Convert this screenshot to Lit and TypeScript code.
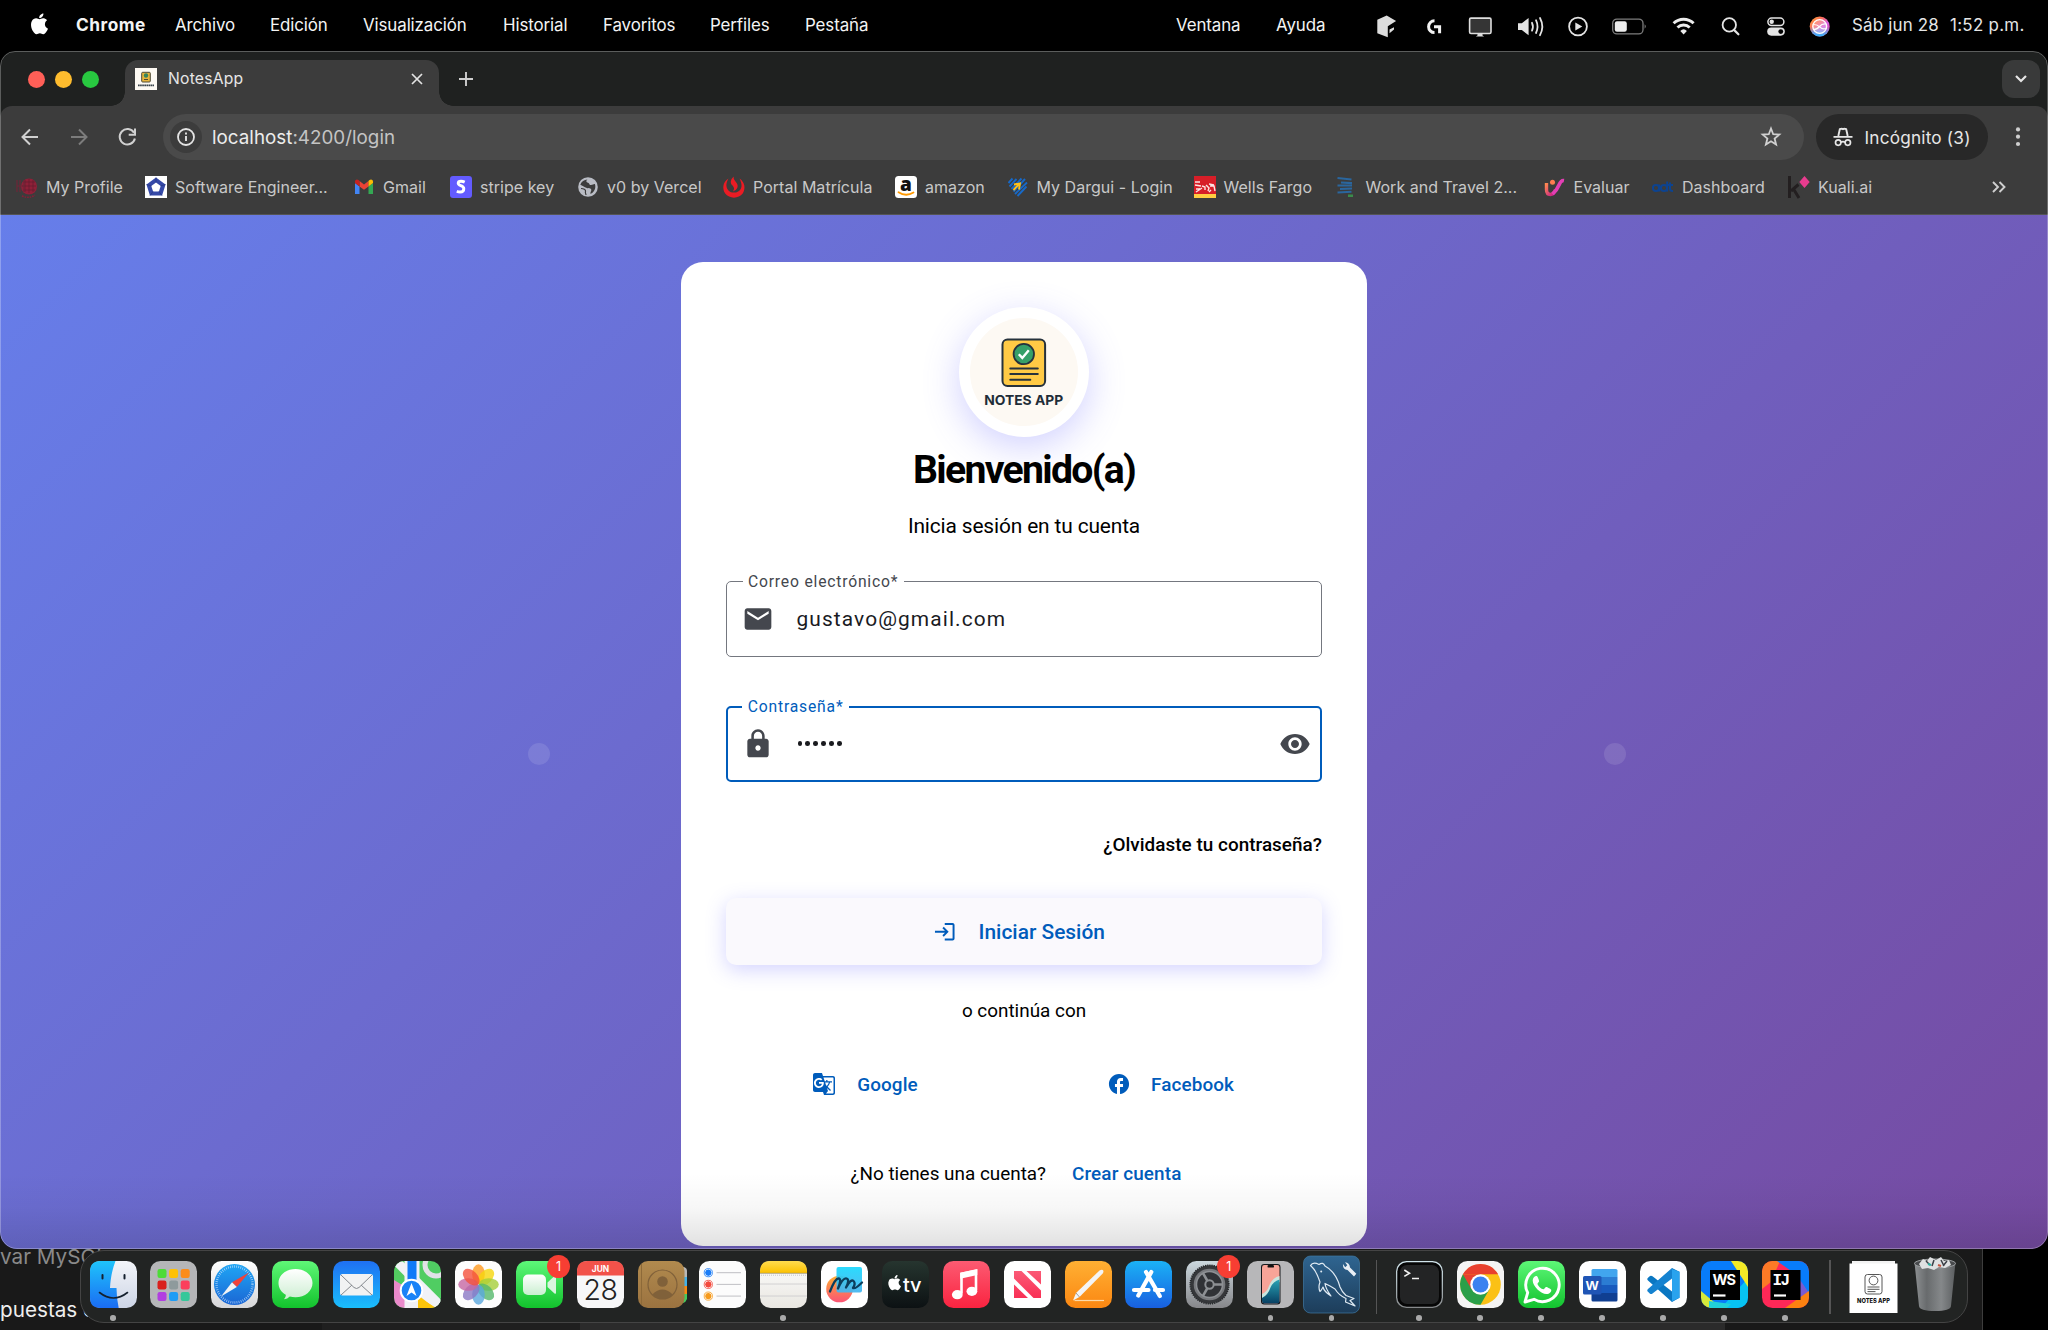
import { LitElement, html, svg, css } from "lit";
import { customElement } from "lit/decorators.js";
import { styleMap } from "lit/directives/style-map.js";

type Cell = { label: string; w: number };

/* ---------- macOS menu bar ---------- */

const menus: Cell[] = [
  { label: "Archivo", w: 95 },
  { label: "Edición", w: 93 },
  { label: "Visualización", w: 140 },
  { label: "Historial", w: 100 },
  { label: "Favoritos", w: 107 },
  { label: "Perfiles", w: 95 },
  { label: "Pestaña", w: 371 },
  { label: "Ventana", w: 100 },
  { label: "Ayuda", w: 101 },
];

// Every status glyph owns a slice of the strip: [start, width, drawing]
const statusIcons: [number, number, unknown][] = [
  [1377, 50, svg`<path d="M1377.3 18.3 1386.7 14l9.4 5.4-8.3 5.3v11l-10.5-4z" fill="#ddd"/><path d="m1389.5 28 4.5-2.3v2.2l-4.5 3.8z" fill="#ddd"/>`],
  [1427, 41, svg`<path d="M1434.5 19.3a5.9 5.9 0 0 0 0 11.8M1434 25.2h5.6v6.6" fill="none" stroke="#f2f2f2" stroke-width="3"/>`],
  [1468, 49, svg`<rect x="1469.6" y="16.6" width="21.4" height="15.4" rx="1.4" fill="#353535" stroke="#dedede" stroke-width="1.6"/><path d="M1477.5 32.5h5v1.5l1.7 1h-8.4l1.7-1z" fill="#dedede"/>`],
  [1517, 50, svg`<path d="M1518 21.8h3.8l6.8-5.2v17.2l-6.8-5.2h-3.8z" fill="#e4e4e4"/><path d="M1532 21.3q1.8 3.9 0 7.8M1536 18.7q3 6.4 0 12.8M1540 16.5q4.6 8.6 0 17.2" fill="none" stroke="#e4e4e4" stroke-width="1.8" stroke-linecap="round"/>`],
  [1567, 44, svg`<circle cx="1578" cy="25" r="8.9" fill="none" stroke="#e4e4e4" stroke-width="1.8"/><path d="m1575.3 21 7 4-7 4z" fill="#e4e4e4"/>`],
  [1611, 60, svg`<rect x="1612.7" y="17.6" width="30.3" height="14.8" rx="4.2" fill="none" stroke="#7d7d7d" stroke-width="1.3"/><rect x="1614.8" y="19.7" width="12" height="10.6" rx="2.2" fill="#ececec"/><path d="M1644.6 22.8q2.4 2.2 0 4.4z" fill="#7d7d7d"/>`],
  [1671, 50, svg`<g fill="none" stroke="#ececec" stroke-width="2.9"><path d="M1673.6 21.8a14.2 14.2 0 0 1 20 0M1677.5 26a8.7 8.7 0 0 1 12.2 0"/></g><path d="M1680.3 29.4a4.8 4.8 0 0 1 6.6 0l-3.3 3.6z" fill="#ececec"/>`],
  [1721, 45, svg`<circle cx="1729.3" cy="23.4" r="6.7" fill="none" stroke="#e4e4e4" stroke-width="1.8"/><path d="m1734 28.4 4.4 4.4" stroke="#e4e4e4" stroke-width="2.2" stroke-linecap="round"/>`],
  [1766, 43, svg`<rect x="1767.9" y="16.6" width="16" height="7.4" rx="3.7" fill="none" stroke="#e4e4e4" stroke-width="1.5"/><circle cx="1771.7" cy="20.3" r="2.2" fill="#e4e4e4"/><rect x="1767.2" y="26" width="17.6" height="8.2" rx="4.1" fill="#e4e4e4"/><circle cx="1780.8" cy="30.1" r="2.4" fill="#000"/>`],
  [1809, 43, svg`<defs><linearGradient id="siri" x1="0" y1="0" x2="1" y2="1"><stop offset="0" stop-color="#ffb02e"/><stop offset=".35" stop-color="#fb6a5c"/><stop offset=".6" stop-color="#d45fe0"/><stop offset="1" stop-color="#f03f86"/></linearGradient><linearGradient id="siri2" x1="0" y1="0" x2="0" y2="1"><stop offset=".5" stop-color="#2fc6ff" stop-opacity="0"/><stop offset="1" stop-color="#25b9ff"/></linearGradient></defs><circle cx="1819.7" cy="25" r="10" fill="url(#siri)"/><circle cx="1819.7" cy="25" r="10" fill="url(#siri2)"/><circle cx="1819.7" cy="25" r="6.9" fill="#fff" fill-opacity=".25" stroke="#fff" stroke-width="1.4"/><path d="M1813.5 23q4 0 6.5 2.6t6 1.4M1813.5 28q3.5 0 6-3t6.5-2.5" fill="none" stroke="#fff" stroke-width="1.2"/>`],
];

/* ---------- bookmarks ---------- */

const bookmarks: { label: string; w: number; icon: unknown }[] = [
  { label: "My Profile", w: 129, icon: svg`<circle cx="13" cy="10.500" r="8" fill="#8f2038"/><path d="M7 6h12M6 10h14M7 14h12M13 3v14M9 4v12M17 4v12" stroke="#5c1c2c" stroke-width=".6"/><path d="M1 4v12M1 10h7M8 5v11M4 4v12" stroke="#6e2637" stroke-width="1.200"/><path d="M6 20q7 3 13-1" stroke="#8c1d37" stroke-width="1.400" fill="none" stroke-dasharray="1.600 1"/>` },
  { label: "Software Engineer...", w: 208, icon: svg`<path fill="#fff" d="M0 0h22v22H0z"/><path d="m11 1.500 9.500 7-3.400 11H4.900L1.500 8.500z" fill="#3549a8"/><path d="m11 6.500 4.700 3.400-1.800 5.600H8.100L6.300 9.900z" fill="#fff"/><path d="M11 1.500v5M1.500 8.500l4.800 1.400M20.500 8.500l-4.800 1.400M5 19.500l3.100-4M17 19.500l-3.100-4" stroke="#24357f" stroke-width=".7"/>` },
  { label: "Gmail", w: 97, icon: svg`<path d="M2 18V7l4.500 3.400V18z" fill="#4285f4"/><path d="M15.500 18v-7.600L20 7v11z" fill="#34a853"/><path d="M6.500 10.400V5l4.500 3.400L15.500 5v5.400L11 13.800z" fill="#ea4335"/><path d="M2 7V5.600C2 3.700 4 2.800 5.500 4l1 .9v5.500z" fill="#c5221f"/><path d="M15.500 10.400V4.900l1-.9C18 2.800 20 3.700 20 5.600V7z" fill="#fbbc04"/>` },
  { label: "stripe key", w: 127, icon: svg`<rect width="22" height="22" rx="3" fill="#635bff"/><path d="M14.700 6.100Q12.800 5.200 11 5.200c-1.700 0-2.800.7-2.800 2 0 2.900 5.600 1.900 5.600 5.500 0 2-1.500 3.300-3.700 3.300q-1.800 0-3.300-.7" fill="none" stroke="#fff" stroke-width="2.900"/>` },
  { label: "v0 by Vercel", w: 146, icon: svg`<circle cx="11" cy="11" r="9.800" fill="#b9bcc4"/><path d="M10.500 3.500c-2 1.500-1 3 .5 3.200s1 2.300 3 2.300 3-1.500 4-.8c1.300 4-1 8.300-4.500 9.800-.5-2 1-2.500.8-4.200S11.500 12.500 10 12 5 9.500 3.300 8.700A8 8 0 0 1 10.500 3.500z" fill="#3c3c3c"/><path d="M4 12.500c2.500 0 5 1 4.500 2.800S9 18 9 19" stroke="#3c3c3c" stroke-width="1.200" fill="none"/>` },
  { label: "Portal Matrícula", w: 172, icon: svg`<path d="M5.500 2.500C-.5 6-.8 13 2.200 17.500c4 5.500 13.500 5.500 17.500 0 3-4.500 2.500-11-3.200-15 2 4 3.500 9-.2 12.200-3 2.600-8 2.500-10.800-.3C2 10.500 3.500 6 5.500 2.500z" fill="#ea1c24"/><path d="M10.800.5c-3.500 3-3.800 6.500-1.500 8.800s2.200 4 .5 6.200c4.500-1.500 6-5 4-8.200S10.300 3.500 10.800.5z" fill="#ea1c24"/>` },
  { label: "amazon", w: 111.5, icon: svg`<rect width="22" height="22" rx="3.500" fill="#fff"/><text x="11" y="14.800" font-family="Open Sans" font-weight="800" font-size="19" text-anchor="middle" fill="#111">a</text><path d="M3.500 16.200q7.500 5 15 .3" fill="none" stroke="#f90" stroke-width="1.800" stroke-linecap="round"/>` },
  { label: "My Dargui - Login", w: 187, icon: svg`<path d="m1.500 7 4-4.500M2.500 10.500 9.500 3M4.500 13 14.500 2.500M6.500 15.500 18 3M8 18 20 6.500M10.500 20l9-9.500" stroke="#1769c8" stroke-width="1.900"/><path d="m6.500 14 5.500-6M7 8.500l6-1-1 6" stroke="#ffc21a" stroke-width="1.900" fill="none"/>` },
  { label: "Wells Fargo", w: 142, icon: svg`<path fill="#d71e28" d="M0 0h22v22H0z"/><path fill="#ffcd41" d="M0 18h22v4H0z"/><path d="M1 6h5M1 9l6 1M2 13h4M8 10l3 1v3M12 9l3 3-1 3M16 10h4l1 5M2 16l6-4M15 8l5 1M17 14l-2 2" stroke="#fbe3e3" stroke-width="1.400" fill="none"/>` },
  { label: "Work and Travel 2...", w: 208, icon: svg`<path d="m1.500 2 14 1.500M5 6.500l11 .6M1.500 9.500h14.500M4 13l12-.5M1.500 16.500l14-.8" stroke="#2a669e" stroke-width="2.100"/><path d="M12 19.700h5" stroke="#3b8b4a" stroke-width="2.400"/>` },
  { label: "Evaluar", w: 108.5, icon: svg`<defs><linearGradient id="ev" x1="0" y1="0" x2="1" y2="1"><stop offset="0" stop-color="#ff8a4f"/><stop offset="1" stop-color="#c3128f"/></linearGradient></defs><path d="M2.500 7v6.500q0 5 4 5 3.500 0 5-5" stroke="url(#ev)" stroke-width="3.400" fill="none"/><path d="M8.500 18Q13 14 15 9t5-4.500" stroke="#e23fb4" stroke-width="3.600" fill="none"/><circle cx="8.500" cy="6.200" r="2.500" fill="#ff7c50"/>` },
  { label: "Dashboard", w: 136, icon: svg`<g fill="none" stroke="#0d438f" stroke-width="2"><circle cx="4" cy="12" r="3.100"/><path d="M7.200 8.500v7"/><circle cx="12" cy="12" r="3.100"/><path d="M15.200 5.500v10M18 6.500v6.500q0 2 3 2M16 9h5"/></g>` },
  { label: "Kuali.ai", w: 100, icon: svg`<path d="M1.500 0v22M10.500 8.500 3 15M5.500 13l5.500 9" stroke="#231f20" stroke-width="3" fill="none"/><path d="m16.500 0 5.200 6-5.200 6-5.200-6z" fill="#e73c8e"/>` },
];

/* ---------- dock ---------- */

type DockItem = { icon: unknown; running?: boolean; badge?: string };

const grad = (id: string, a: string, b: string) =>
  svg`<defs><linearGradient id=${id} x1="0" y1="0" x2="0" y2="1"><stop offset="0" stop-color=${a}/><stop offset="1" stop-color=${b}/></linearGradient></defs>`;
const tile = (fill: string) => svg`<rect width="47" height="47" rx="10.500" fill=${fill}/>`;

const padColors = ["#4ddb38", "#ffc107", "#fb8c1a", "#d91f1c", "#8e9a9c", "#fb3f5c", "#b13fe0", "#1e9cf5", "#35c79a"];
const petals = ["#ff9a1f", "#f6d60d", "#a5ce39", "#55b86b", "#5aa8dd", "#8a78c4", "#c667a2", "#f4513c"];

const dockMain: DockItem[] = [
  { running: true, icon: svg`${grad("fn", "#1fc4fb", "#1a6cf3")}${grad("fw", "#f3f5f9", "#cdd5e6")}<rect width="47" height="47" rx="10.500" fill="url(#fw)"/><path d="M10.500 0h15C22 9 20.500 18 20 27h6.500q0 10 2.200 20H10.500Q0 47 0 36.500v-26Q0 0 10.500 0z" fill="url(#fn)"/><path d="M12.500 14v3.500M34.500 14v3.500" stroke="#14202e" stroke-width="2" stroke-linecap="round"/><path d="M9.500 31.500q14 11 28 0" stroke="#14202e" stroke-width="1.600" fill="none" stroke-linecap="round"/>` },
  { icon: svg`${tile("#b5b6b8")}${padColors.map((c, i) => svg`<rect x=${7.5 + (i % 3) * 11.6} y=${8 + Math.floor(i / 3) * 11.5} width="9" height="9" rx="2.200" fill=${c}/>`)}` },
  { icon: svg`${grad("sf", "#ffffff", "#d7d7d9")}${grad("sb", "#1fa6f5", "#1b66d4")}${tile("url(#sf)")}<circle cx="23.500" cy="23.500" r="20.500" fill="url(#sb)"/><circle cx="23.500" cy="23.500" r="18" fill="none" stroke="#d6ebff" stroke-width="2.400" stroke-dasharray=".7 1.400" opacity=".8"/><path d="M38 11.500 25.800 26 21 21.200z" fill="#f0423a"/><path d="M10 35.500 21 21.200l4.800 4.800z" fill="#f1f3f5"/>` },
  { icon: svg`${grad("ms", "#5ff777", "#12c22c")}${grad("mb", "#ffffff", "#cdeed2")}${tile("url(#ms)")}<path d="M23.500 8c9.500 0 17 6 17 14s-7.500 14.300-17 14.300q-3 0-5.700-.8-2.300 2.500-5.800 2.800 2-2 1.800-4.600C9.200 31.200 6.500 27 6.500 22c0-8 7.500-14 17-14z" fill="url(#mb)"/>` },
  { icon: svg`${grad("ml", "#1f70f2", "#1abefc")}${tile("url(#ml)")}<rect x="7" y="13" width="33" height="21.500" rx="2.500" fill="#f1f2f3"/><path d="M8 14l13 12.500q2.500 2 5 0L39 14M8 34l11-10M39 34 28 24" fill="none" stroke="#85898f" stroke-width="1"/>` },
  { icon: svg`<defs><clipPath id="mp"><rect width="47" height="47" rx="10.500"/></clipPath></defs><g clip-path="url(#mp)"><path fill="#50cd62" d="M0 0h47v47H0z"/><path d="M0 19 18 30v17H0z" fill="#ea8acb"/><path d="M24 34l23 13H24z" fill="#fbc40b"/><path d="M-3 0h14v18H-3z" fill="#52cb60"/><path d="M4 0 47 40v12L24 34" fill="#f1f1f6"/><path d="M-2-4 50 48" stroke="#f1f1f6" stroke-width="9"/><path d="M18 0v47" stroke="#f1f1f6" stroke-width="15"/><path d="M24 36l20 12H24z" fill="#fbc40b"/><path d="M18 0v30" stroke="#117af8" stroke-width="9"/><circle cx="42" cy="4" r="11" fill="none" stroke="#e1e1e6" stroke-width="5"/></g><circle cx="17.500" cy="29.500" r="10.800" fill="#1a83f7" stroke="#fff" stroke-width="2"/><path d="m17.500 22 5 13-5-3.500-5 3.500z" fill="#fff"/>` },
  { icon: svg`${tile("#fdfdfd")}${petals.map((c, i) => svg`<ellipse cx="23.500" cy="13.200" rx="6.300" ry="10" fill=${c} opacity=".8" transform=${`rotate(${i * 45} 23.500 23.500)`}/>`)}` },
  { badge: "1", icon: svg`${grad("ft", "#5df779", "#12c22c")}${grad("fc", "#ffffff", "#c9efd0")}${tile("url(#ft)")}<rect x="7" y="13.500" width="23" height="20.500" rx="5" fill="url(#fc)"/><path d="M31.500 21.500 38.500 15q1.500-1 1.500.7v16q0 1.800-1.500.8l-7-6.500z" fill="#d8f5de"/>` },
  { icon: svg`${tile("#f7f7f8")}<path d="M0 14.500v-4Q0 0 10.500 0h26Q47 0 47 10.500v4z" fill="#f2524a"/><text x="23.500" y="11" font-family="Inter" font-weight="700" font-size="8.400" text-anchor="middle" fill="#fff">JUN</text><text x="23.500" y="39.200" font-family="Inter" font-weight="300" font-size="28.500" letter-spacing="-.5" text-anchor="middle" fill="#222">28</text>` },
  { icon: svg`<path d="M38 6h8q3 1 3 4v6H38z" fill="#b8b8b8"/><path fill="#44b2e8" d="M38 16h11v9H38z"/><path fill="#f68a13" d="M38 25h11v8H38z"/><path d="M38 33h11v5q-1 3-4 4h-7z" fill="#45cb5c"/>${grad("ct", "#b18a4e", "#9b7340")}<rect width="46.500" height="47" rx="10" fill="url(#ct)"/><path d="M3.500 3v41" stroke="#8d6a39" stroke-width="1"/><circle cx="24.500" cy="23.500" r="14.500" fill="none" stroke="#80613a" stroke-width="1.200"/><circle cx="24.500" cy="20.500" r="5.300" fill="#80613a"/><path d="M14.300 33.500q10-10 20.400 0-10 9-20.400 0z" fill="#80613a"/>` },
  { icon: svg`${tile("#fcfcfc")}${["#1a7cf7", "#f34a3e", "#f69a1c"].map((c, i) => svg`<circle cx="9.300" cy=${11.7 + i * 11.7} r="3.700" fill=${c} stroke="#fff" stroke-width="1"/><circle cx="9.300" cy=${11.7 + i * 11.7} r="4.100" fill="none" stroke=${c} stroke-width=".8"/><path d=${`M17.500 ${11.7 + i * 11.7}H42`} stroke="#b9b9bd" stroke-width=".9"/>`)}` },
  { running: true, icon: svg`${grad("nt", "#ffdc4f", "#fcc100")}${grad("nb", "#fcfcfc", "#e9e7e1")}${tile("url(#nb)")}<path d="M0 12v-1.500Q0 0 10.500 0h26Q47 0 47 10.500V12z" fill="url(#nt)"/><path d="M0 12.300h47" stroke="#9d9164" stroke-width=".8"/><path d="M1 14.200h45" stroke="#b9b9b9" stroke-width=".8" stroke-dasharray="1 1"/><path d="M0 23h47M0 35h47" stroke="#c9c9cc" stroke-width=".8"/>` },
  { icon: svg`${grad("fo", "#fdaf35", "#fb5475")}${grad("fb", "#1bd8fd", "#46b5ef")}${tile("#fff")}<circle cx="18.500" cy="28" r="13.300" fill="url(#fo)"/><rect x="15.500" y="6" width="25.500" height="25.500" rx="2" fill="url(#fb)" opacity=".93"/><path d="M9 30.500q5-13 8.500-13t-.5 10q5-11 8.500-10t-.5 9q5-9 7.500-6.500T32 27q2 1.500 9-5.500" fill="none" stroke="#0c3e5c" stroke-width="2.300" stroke-linecap="round" stroke-linejoin="round"/>` },
  { icon: svg`${grad("tv", "#26352f", "#0c1113")}${tile("url(#tv)")}<g transform="translate(6.500 14.500) scale(.76)"><path d="M13.300 9.600c0-2.400 2-3.600 2.100-3.700-1.200-1.700-3-1.900-3.600-2-1.500-.1-3 .9-3.800.9S6 3.900 4.700 4C3 4 1.400 5 .6 6.500c-1.800 3.100-.5 7.700 1.300 10.200.8 1.200 1.800 2.600 3.200 2.600s1.800-.8 3.400-.8 2 .8 3.400.8 2.300-1.300 3.100-2.500c1-1.400 1.400-2.800 1.400-2.800s-3.100-1.100-3.100-4.400zM10.900 2.500C11.600 1.700 12 .6 11.900-.5c-1 0-2.200.7-2.900 1.500-.6.7-1.200 1.800-1 2.900 1 .1 2.200-.6 2.900-1.400z" fill="#fff"/></g><text x="21" y="30.500" font-family="Inter" font-weight="500" font-size="20" letter-spacing="-.2" fill="#fff">tv</text>` },
  { icon: svg`${grad("mu", "#fc5b72", "#fa2340")}${tile("url(#mu)")}<path d="M18.500 32.500V12.800l14.500-3v19.500" fill="none" stroke="#fff" stroke-width="2.600"/><path d="M17.200 11.700 34.300 8v6l-17.100 3.700z" fill="#fff"/><ellipse cx="14.300" cy="33.700" rx="5.400" ry="4.600" fill="#fff"/><ellipse cx="28.900" cy="30.300" rx="5.400" ry="4.600" fill="#fff"/>` },
  { icon: svg`${grad("ne", "#fb5a76", "#f93055")}${tile("#fff")}<path d="M10 10h7.500L37 29.500V37h-7.500L10 17.500zM22.500 10H37v13.500zM10 23.500 24 37H10z" fill="url(#ne)"/>` },
  { icon: svg`${grad("pg", "#ffb033", "#fb8712")}${tile("url(#pg)")}<path d="M9.500 39.500H39" stroke="#fdd9a8" stroke-width="1.200"/><path d="M8 39.500 11 32 34.500 9.500q3-1.500 4 .5 0 1.500-1 2.800L14.500 36z" fill="#f4f4f4"/><path d="m11 32 3.500 4" stroke="#999" stroke-width="1"/>` },
  { icon: svg`${grad("as", "#1bb2f6", "#185fe0")}${tile("url(#as)")}<g stroke="#fff" stroke-width="4.200" stroke-linecap="round"><path d="m26.300 11-13 23.500M21 11l13.800 24M9 29h14.500M30 29h8"/></g>` },
  { badge: "1", icon: svg`${grad("st", "#ccd8de", "#86878a")}${tile("url(#st)")}<circle cx="23.500" cy="23.500" r="19.300" fill="#35373a" stroke="#26282b" stroke-width="1.600" stroke-dasharray="1.200 1"/><circle cx="23.500" cy="23.500" r="15.800" fill="#77797d"/><circle cx="23.500" cy="23.500" r="13" fill="#303236" stroke="#8d9094" stroke-width="1.500"/><path d="M23.500 23.500H37M23.500 23.500l-6.800-11.800M23.500 23.500l-6.800 11.800" stroke="#8d9094" stroke-width="2.600"/><circle cx="23.500" cy="23.500" r="4.200" fill="#303236" stroke="#8d9094" stroke-width="2"/>` },
  { running: true, icon: svg`${tile("#b7b7b9")}${grad("ph", "#2aa3b5", "#073f62")}<rect x="14" y="3" width="19.500" height="40.500" rx="3.200" fill="#15181b"/><rect x="15" y="4" width="17.500" height="38.500" rx="2.400" fill="#f8a498"/><path d="M15 33q5-2 7-8 3-8 10.500-10v6Q26 23 23 31t-8 9z" fill="#c9e6df"/><path d="M15 37q6-3 8.500-10.500 2.500-6 9-8V40q0 2.500-2.400 2.500H17.400Q15 42.500 15 40z" fill="url(#ph)"/><rect x="20.500" y="4" width="6.500" height="2.600" rx="1.200" fill="#111"/>` },
  { running: true, icon: svg`${grad("my", "#2f6591", "#1d3d5a")}<rect x="-4.500" y="-5" width="56" height="57" rx="7" fill="url(#my)" stroke="#3f7aa5" stroke-width=".7"/><path d="M2.500 4.500Q5 .5 11 3.500q4-3 6 1.500 11 6 15 21 2 5 6 8.500l8 3-4 2 5 5.500-9.500-4 .5-3.500q-7-3-11-9.500l-5-3-5-2.500q.5 5 6 12.500-7-4.500-8-9-2 4-3 4.500-2-4 0-9.500-4-11.500-8-15z" fill="none" stroke="#dfeaf3" stroke-width="1.200" stroke-linejoin="round"/><circle cx="13.200" cy="10.500" r="1" fill="#dfeaf3"/><path d="M35 3q-.5 5 4.500 6l6.500 6.500 2.300-2.800L42 6.500q-.5-5-5-5.200l2.300 3-2.100 1.900z" fill="#e9eff5"/>` },
];

const dockApps: DockItem[] = [
  { running: true, icon: svg`${grad("tr", "#d3e7ee", "#86898b")}${tile("url(#tr)")}<rect x="1.300" y="1.300" width="44.400" height="44.400" rx="9.400" fill="#060606"/><rect x="4" y="4" width="39" height="39" rx="7" fill="#232425"/><path d="m8.300 9 5.200 3.200-5.200 3.200" stroke="#f1f1f1" stroke-width="1.600" fill="none"/><path d="M16 17.500h7" stroke="#f1f1f1" stroke-width="1.500"/>` },
  { running: true, icon: svg`${tile("#f4f4f4")}<g transform="translate(23.500 23.500)"><circle r="20.300" fill="#fbc116"/><path d="M-17.600-10.200A20.300 20.300 0 0 1 17.600-10.200H0z" fill="#e8402f"/><path d="M-17.600-10.200A20.300 20.300 0 0 0 0 20.300l8.800-15.200L0 0z" fill="#2a9f49"/><path d="M-17.600-10.200-8.800 5.100 0 0v-10.200z" fill="#e8402f"/><circle r="10.200" fill="#fff"/><circle r="8" fill="#3c82f0"/></g>` },
  { running: true, icon: svg`${grad("wa", "#5df777", "#12c22e")}${tile("url(#wa)")}<path d="M7 41l2.700-9.300A16.700 16.700 0 1 1 16 38.300z" fill="none" stroke="#fff" stroke-width="2.900" stroke-linejoin="round"/><path d="M18.700 15c-1.700-.3-4 1.600-4 4.500 0 5.800 8.300 13.500 13.700 13.500 3.200 0 5.300-2.500 4.800-4.300-.3-.6-4.300-2.900-5.200-2.700-1 .3-1.600 2.200-2.600 2.200-2 0-5.900-3.800-5.900-5.500 0-.8 1.500-1.500 1.600-2.500.1-.7-1.500-4.900-2.400-5.200z" fill="#fff"/>` },
  { running: true, icon: svg`${tile("#fff")}<path d="M14 8h23q1.500 0 1.500 1.500V16H12.500V9.500Q12.500 8 14 8z" fill="#41a5ee"/><path fill="#2b7cd3" d="M12.500 16h26v8h-26z"/><path fill="#185abd" d="M12.500 24h26v8h-26z"/><path d="M12.500 32h26v7q0 1.500-1.500 1.500H14q-1.500 0-1.500-1.500z" fill="#103f91"/><rect x="4" y="15" width="18.500" height="18.500" rx="1.600" fill="#1f55b5"/><text x="13.200" y="29" font-family="Liberation Sans" font-weight="700" font-size="13.500" text-anchor="middle" fill="#fff">W</text>` },
  { running: true, icon: svg`${tile("#fff")}<path d="m32 7 7.500 3.700v26L32 41 8 19.500q-1.500-1.500 0-2.800l2-1.700q1.200-.8 2.500.2L32 30.500z" fill="#0a77c2"/><path d="M32 7 8 28q-1.500 1.500 0 2.800l2 1.900q1.200.8 2.500-.2L32 17.500z" fill="#1482d0"/><path d="M30.500 7.500 39.500 10.700v26L30.500 41q1.500 0 1.500-2V9q0-1.500-1.500-1.500z" fill="#29a3ee"/>` },
  { running: true, icon: svg`<defs><clipPath id="wc"><rect width="47" height="47" rx="10.500"/></clipPath></defs><g clip-path="url(#wc)"><path fill="#087cfa" d="M0 0h47v47H0z"/><path fill="#07c3f2" d="m20 47 27-30v30z"/><path d="M30 0h17v26z" fill="#f3ea26"/><path d="m0 30 20 17H0z" fill="#d6ea3a"/><path d="m8 40 22 3-4 4H8z" fill="#21d0d8"/></g><path d="M9 9h30v30H9z"/><text x="11.500" y="24" font-family="Inter" font-weight="700" font-size="14.500" fill="#fff" textLength="23.500">WS</text><path d="M12 34.500h12.500" stroke="#fff" stroke-width="2.200"/>` },
  { running: true, icon: svg`<defs><clipPath id="jc"><rect width="47" height="47" rx="10.500"/></clipPath></defs><g clip-path="url(#jc)"><path fill="#fe2857" d="M0 0h47v47H0z"/><path d="M0 0h18L9 21 0 28z" fill="#fc7a26"/><path d="M15 0h32v36L32 12z" fill="#087cfa"/><path d="M32 10 47 32 36 40z" fill="#7a5bd0"/><path d="m47 30-24 17h24z" fill="#fc8110"/></g><path d="M8.500 9h30v30h-30z"/><text x="10.500" y="24" font-family="Liberation Mono" font-weight="700" font-size="16" letter-spacing="-1.500" fill="#fff">IJ</text><path d="M12 34.500h12" stroke="#fff" stroke-width="2.200"/>` },
];

const apple = svg`<path d="M14.900 10.600c0-2.700 2.100-3.900 2.200-4-1.200-1.800-3.100-2-3.700-2.100-1.600-.2-3.100.9-3.900.9s-2-.9-3.300-.9C4.400 4.600 2.800 5.600 1.900 7.200c-1.800 3.200-.5 8 1.300 10.600.9 1.300 1.900 2.700 3.300 2.700 1.300-.1 1.800-.9 3.400-.9s2 .9 3.400.8c1.400 0 2.300-1.300 3.200-2.600 1-1.500 1.400-2.900 1.400-2.900s-3-1.200-3-4.300zM12.300 2.900C13 2 13.500.9 13.400-.3c-1 0-2.300.7-3.100 1.600-.7.7-1.200 1.900-1.100 3 1.200.1 2.300-.6 3.100-1.400z" fill="#fff"/>`;

@customElement("app-root")
export class AppRoot extends LitElement {
  static styles = css`
    :host { display: block; position: relative; width: 2048px; height: 1330px; overflow: hidden; background: #000; font-family: Inter, "Liberation Sans", sans-serif; }
    * { box-sizing: border-box; }
    svg { display: block; flex: none; overflow: visible; }
    .menubar { display: flex; align-items: center; height: 51px; padding-left: 30px; color: #f4f4f4; font-size: 16.9px; white-space: pre; letter-spacing: -.1px; }
    .menubar span { padding-bottom: 2px; }
    .menubar .mark { margin: 0 27px 2px 0; }
    .app-name { width: 99px; font-weight: 700; letter-spacing: .5px; font-size: 17.300px; }
    .menu { flex: none; }
    .date { width: 98px; }
    .menubar .date, .menubar .time { color: #e6e6e6; letter-spacing: .2px; }
    .menubar .time { letter-spacing: .3px; }

    .window { position: relative; display: flex; flex-direction: column; height: 1198px; border-radius: 15px 15px 17px 17px; overflow: hidden; background: #1f2120; }
    .frame { position: absolute; inset: 0; border-radius: 15px 15px 17px 17px; border: 1.300px solid rgba(255,255,255,.27); pointer-events: none; }

    .tabs { display: flex; height: 55px; padding-left: 28px; align-items: center; }
    .lights { display: flex; gap: 10px; width: 97px; padding-top: 1px; }
    .light { width: 17px; height: 17px; border-radius: 50%; }
    .red { background: #ff5f57; } .yellow { background: #febc2e; } .green { background: #28c840; }
    .tab { position: relative; display: flex; align-items: center; align-self: flex-end; width: 314px; height: 46px; padding: 0 16px 9px 10px; border-radius: 13px 13px 0 0; background: #3c3c3c; color: #e6e6e6; font-size: 15.700px; }
    .tab::before, .tab::after { content: ""; position: absolute; bottom: 0; width: 14px; height: 14px; }
    .tab::before { left: -14px; background: radial-gradient(circle at 0 0, transparent 13.500px, #3c3c3c 14px); }
    .tab::after { right: -14px; background: radial-gradient(circle at 100% 0, transparent 13.500px, #3c3c3c 14px); }
    .tab-title { flex: 1; padding-left: 11px; letter-spacing: .2px; }
    .plus { margin-left: 19px; }
    .chevron { display: grid; place-items: center; width: 38px; height: 38px; margin-left: auto; margin-right: 8px; border-radius: 12px; background: #393a3a; }

    .toolbar { display: flex; align-items: center; height: 62px; padding-left: 18px; background: #3c3c3c; border-radius: 12px 12px 0 0; }
    .nav { margin-right: 24.500px; }
    .address { display: flex; align-items: center; width: 1641px; height: 46px; margin-left: -1px; padding: 0 22px 0 7px; border-radius: 23px; background: #4a4a4a; color: #c4c4c4; font-size: 18.800px; letter-spacing: .02px; }
    .address b { font-weight: 400; color: #ededed; }
    .info { display: grid; place-items: center; width: 32px; height: 32px; margin-right: 10.500px; border-radius: 50%; background: #3c3c3c; }
    .url { flex: 1; }
    .incognito { display: flex; align-items: center; gap: 12px; width: 172px; height: 46px; margin-left: 12px; padding-left: 17px; border-radius: 23px; background: #282828; color: #e6e6e6; font-size: 17.200px; letter-spacing: .2px; white-space: nowrap; }
    .dots { margin-left: 27px; }

    .bookmarks { display: flex; align-items: center; height: 47px; padding: 0 0 9px 16px; background: #3c3c3c; color: #c8c8c8; font-size: 16px; border-bottom: 1px solid #545454; white-space: nowrap; letter-spacing: .03px; }
    .bookmark { display: flex; align-items: center; gap: 8px; flex: none; }
    .more { margin-left: 104px; }

    .page { position: relative; display: flex; justify-content: center; flex: 1; padding-top: 47px; background: linear-gradient(135deg, #667eea 0%, #764ba2 100%); }
    .bubble { position: absolute; top: 528px; width: 22px; height: 22px; border-radius: 50%; background: rgba(255,255,255,.11); }
    .bubble.a { left: 527.500px; } .bubble.b { left: 1604px; }
    .shade { position: absolute; inset: auto 0 0 0; height: 76px; background: linear-gradient(rgba(0,0,0,0), rgba(0,0,0,.03) 45%, rgba(0,0,0,.12)); pointer-events: none; }

    .card { width: 686px; height: 984px; padding: 44.500px 45px 0; border-radius: 22px; background: #fff; color: #000; font-family: Roboto, "Liberation Sans", sans-serif; }
    .logo { display: grid; place-items: center; width: 130px; height: 130px; margin: 0 auto; border-radius: 50%; background: #fff; box-shadow: 0 10px 36px rgba(102,102,255,.3); }
    .title { margin: 7.500px 0 0; height: 52px; line-height: 52px; text-align: center; font-size: 39.200px; font-weight: 700; letter-spacing: -1.700px; }
    .subtitle { margin-top: 16px; height: 28px; line-height: 28px; text-align: center; font-size: 20.900px; letter-spacing: -.14px; }
    .field { position: relative; display: flex; align-items: center; height: 76px; margin-top: 41px; padding-left: 14.500px; border: 1.300px solid #74777f; border-radius: 5px; color: #1a1b1f; font-size: 20.900px; letter-spacing: 1.100px; }
    .field.focus { height: 76px; margin-top: 48.500px; padding: 0 9px 0 13.500px; border: 2.600px solid #005cbb; }
    .label { position: absolute; left: 15.500px; top: -11px; height: 22px; line-height: 22px; padding: 0 5.500px; background: #fff; color: #44474e; font-size: 15.700px; letter-spacing: .8px; }
    .focus .label { left: 14.300px; top: -12px; color: #005cbb; }
    .value { flex: 1; padding-left: 23px; }
    .pips { display: flex; flex: 1; gap: 3.300px; padding-left: 24px; }
    .pip { width: 4.700px; height: 4.700px; border-radius: 50%; background: #1a1b1f; }
    .forgot { margin-top: 48px; height: 28px; line-height: 29px; text-align: right; font-size: 18.900px; font-weight: 500; letter-spacing: .03px; }
    .submit { display: flex; align-items: center; justify-content: center; gap: 22px; height: 67px; margin-top: 40px; padding: 1px 10px 0 0; border-radius: 10px; background: #faf9fd; box-shadow: 0 5px 20px rgba(102,102,255,.28); color: #005cbb; font-size: 20.900px; font-weight: 500; }
    .or { margin-top: 33px; height: 24px; line-height: 26px; text-align: center; font-size: 18.900px; }
    .social { display: grid; grid-template-columns: 1fr 1fr; gap: 16px; margin-top: 36.500px; height: 52px; }
    .social div { display: flex; align-items: center; justify-content: center; gap: 21px; padding-right: 12px; color: #005cbb; font-size: 18.900px; font-weight: 500; letter-spacing: .1px; }
    .signup { display: flex; justify-content: center; gap: 26px; margin-top: 51px; height: 24px; line-height: 26px; padding-right: 16px; font-size: 18.900px; }
    .signup b { color: #005cbb; font-weight: 500; letter-spacing: .12px; }

    .desktop { position: absolute; left: 0; top: 1225px; width: 1983px; height: 105px; background: #191919; border-right: 1px solid #3d3d3d; color: #eee; font-size: 20.700px; white-space: nowrap; padding-top: 19.500px; }
    .desktop .dim { color: #8a8a8a; height: 24px; line-height: 24px; }
    .desktop .lit { margin-top: 29px; height: 24px; line-height: 24px; }
    .pane { position: absolute; left: 322px; bottom: 0; width: 1403px; height: 7px; background: linear-gradient(90deg, #1f1f1f 258px, #2b2b2b 258px); }

    .dock { position: absolute; left: 80px; top: 1250px; display: flex; align-items: flex-start; width: 1888px; height: 73px; padding: 10px 0 0 8.500px; border-radius: 24px; border: 1px solid #444; background: #222423; }
    .slot { position: relative; display: flex; flex-direction: column; align-items: flex-start; flex: none; width: 60.950px; }
    .dot { width: 5.600px; height: 5.600px; margin: 7px 0 0 20.500px; border-radius: 50%; background: #a9a9a9; }
    .badge { position: absolute; left: 31px; top: -6px; width: 23px; height: 23px; border-radius: 50%; background: #f73e33; color: #fff; font-size: 12.500px; line-height: 23px; text-align: center; }
    .sep { flex: none; width: 1.500px; height: 54px; margin: -1px 18.500px 0 6.800px; background: #555; }
    .sep.end { margin: -1px 18.500px 0 6.700px; }
    .trash { margin: -4px 0 0 15.500px; }
  `;

  private dockItem(item: DockItem) {
    return html`<div class="slot">
      <svg width="47" height="47" viewBox="0 0 47 47">${item.icon}</svg>
      ${item.running ? html`<i class="dot"></i>` : null}
      ${item.badge ? html`<span class="badge">${item.badge}</span>` : null}
    </div>`;
  }

  render() {
    return html`
      <div class="desktop"><div class="dim">var MySQL</div><div class="lit">puestas c</div><div class="pane"></div></div>
      <header class="menubar">
        <svg class="mark" width="19" height="23" viewBox="0 0 19 21.500">${apple}</svg>
        <span class="app-name">Chrome</span>
        ${menus.map((m) => html`<span class="menu" style=${styleMap({ width: `${m.w}px` })}>${m.label}</span>`)}
        ${statusIcons.map(([x, w, art]) => html`<svg width=${w} height="24" viewBox=${`${x} 12.500 ${w} 24`}>${art}</svg>`)}
        <span class="date">Sáb jun 28</span><span class="time">1:52 p.m.</span>
      </header>

      <main class="window">
        <div class="tabs">
          <div class="lights"><i class="light red"></i><i class="light yellow"></i><i class="light green"></i></div>
          <div class="tab">
            <svg width="22" height="22" viewBox="0 0 22 22"><path fill="#fdf9f3" d="M0 0h22v22H0z"/><rect x="6.700" y="4.300" width="8.600" height="9.700" rx="1" fill="#e9b53c" stroke="#4d4a38"/><circle cx="11" cy="7.500" r="2.200" fill="#36855d"/><path d="M9 11.500h4" stroke="#4d4a38"/><path d="M3 17.300h16" stroke="#39434b" stroke-width="1.800" stroke-dasharray="1.700 .4"/></svg>
            <span class="tab-title">NotesApp</span>
            <svg width="12" height="12" viewBox="0 0 12 12"><path d="m1 1 10 10M11 1 1 11" stroke="#e3e3e3" stroke-width="1.700"/></svg>
          </div>
          <svg class="plus" width="16" height="16" viewBox="0 0 16 16"><path d="M8 1v14M1 8h14" stroke="#cfcfcf" stroke-width="1.900"/></svg>
          <div class="chevron"><svg width="12" height="8" viewBox="0 0 12 8"><path d="m1 1 5 5 5-5" fill="none" stroke="#e6e6e6" stroke-width="2.200"/></svg></div>
        </div>

        <div class="toolbar">
          <svg class="nav" width="24" height="24" viewBox="0 0 24 24"><path d="M20 12H5M12 4.500 4.500 12l7.500 7.500" fill="none" stroke="#d0d0d0" stroke-width="2"/></svg>
          <svg class="nav" width="24" height="24" viewBox="0 0 24 24"><path d="M4 12h15M12 4.500l7.500 7.500-7.500 7.500" fill="none" stroke="#7c7c7c" stroke-width="2"/></svg>
          <svg class="nav" width="24" height="24" viewBox="0 0 24 24"><path d="M19 7.800A7.700 7.700 0 1 0 19.900 13.500M20 3.500v6.300h-6.300" fill="none" stroke="#d0d0d0" stroke-width="2"/></svg>
          <div class="address">
            <span class="info"><svg width="20" height="20" viewBox="0 0 20 20"><circle cx="10" cy="10" r="8" fill="none" stroke="#e3e3e3" stroke-width="1.800"/><path d="M10 9v5M10 5.600v2" stroke="#e3e3e3" stroke-width="1.900"/></svg></span>
            <span class="url"><b>localhost</b>:4200/login</span>
            <svg width="22" height="22" viewBox="0 0 22 22"><path d="m11 2.500 2.200 5.700 6.100.4-4.700 3.900 1.500 6L11 15.200l-5.100 3.300 1.500-6-4.700-3.900 6.100-.4z" fill="none" stroke="#d0d0d0" stroke-width="1.800"/></svg>
          </div>
          <div class="incognito">
            <svg width="20" height="20" viewBox="0 0 20 20"><path d="M5.300 9 6.800 2.200q2-.8 3.200-.1 1.200-.7 3.200.1L14.700 9M.5 9.900h19" fill="none" stroke="#e6e6e6" stroke-width="1.900"/><circle cx="5.200" cy="15.600" r="2.700" fill="none" stroke="#e6e6e6" stroke-width="1.700"/><circle cx="14.800" cy="15.600" r="2.700" fill="none" stroke="#e6e6e6" stroke-width="1.700"/><path d="M7.700 15.200q2.300-1.300 4.600 0" fill="none" stroke="#e6e6e6" stroke-width="1.700"/></svg>
            <span>Incógnito (3)</span>
          </div>
          <svg class="dots" width="6" height="22" viewBox="0 0 6 22"><g fill="#cfcfcf"><circle cx="3" cy="3.400" r="2.100"/><circle cx="3" cy="10.700" r="2.100"/><circle cx="3" cy="18" r="2.100"/></g></svg>
        </div>

        <nav class="bookmarks">
          ${bookmarks.map((b) => html`<span class="bookmark" style=${styleMap({ width: `${b.w}px` })}><svg width="22" height="22" viewBox="0 0 22 22">${b.icon}</svg>${b.label}</span>`)}
          <svg class="more" width="14" height="12" viewBox="0 0 14 12"><path d="m1 1 5 5-5 5M7.500 1l5 5-5 5" fill="none" stroke="#cfcfcf" stroke-width="1.900"/></svg>
        </nav>

        <section class="page">
          <i class="bubble a"></i><i class="bubble b"></i>
          <div class="card">
            <div class="logo">
              <svg width="108" height="108" viewBox="0 0 108 108">
                <circle cx="54" cy="54" r="54" fill="#fdf9f3"/>
                <rect x="32.500" y="21.500" width="42.600" height="46.500" rx="5" fill="#ffca45" stroke="#26323c" stroke-width="2"/>
                <circle cx="53.800" cy="36" r="10.200" fill="#36a068" stroke="#26323c" stroke-width="1.800"/>
                <path d="m48.800 36.200 3.500 3.700 6.500-7.700" fill="none" stroke="#fff" stroke-width="2.400"/>
                <path d="M40.300 50.500h27.500M40.300 56h27.500M40.300 61.700h20" stroke="#26323c" stroke-width="2" stroke-linecap="round"/>
                <text x="14.200" y="86.700" font-family="Inter" font-weight="700" font-size="13.600" fill="#1f2d38" textLength="79" lengthAdjust="spacingAndGlyphs">NOTES APP</text>
              </svg>
            </div>
            <h1 class="title">Bienvenido(a)</h1>
            <div class="subtitle">Inicia sesión en tu cuenta</div>

            <div class="field">
              <span class="label">Correo electrónico*</span>
              <svg width="32" height="32" viewBox="0 0 24 24"><path d="M20 4H4c-1.100 0-1.990.9-1.990 2L2 18c0 1.100.9 2 2 2h16c1.100 0 2-.9 2-2V6c0-1.100-.9-2-2-2zm0 4-8 5-8-5V6l8 5 8-5v2z" fill="#44474e"/></svg>
              <span class="value">gustavo@gmail.com</span>
            </div>

            <div class="field focus">
              <span class="label">Contraseña*</span>
              <svg width="32" height="32" viewBox="0 0 24 24"><path d="M18 8h-1V6c0-2.760-2.240-5-5-5S7 3.240 7 6v2H6c-1.100 0-2 .9-2 2v10c0 1.100.9 2 2 2h12c1.100 0 2-.9 2-2V10c0-1.100-.9-2-2-2zm-6 9c-1.100 0-2-.9-2-2s.9-2 2-2 2 .9 2 2-.9 2-2 2zm3.100-9H8.900V6c0-1.710 1.390-3.100 3.100-3.100 1.710 0 3.100 1.390 3.100 3.100v2z" fill="#44474e"/></svg>
              <span class="pips">${[0, 1, 2, 3, 4, 5].map(() => html`<i class="pip"></i>`)}</span>
              <svg width="32" height="32" viewBox="0 0 24 24"><path d="M12 4.500C7 4.500 2.730 7.610 1 12c1.730 4.390 6 7.500 11 7.500s9.270-3.110 11-7.500c-1.730-4.390-6-7.500-11-7.500zM12 17c-2.760 0-5-2.240-5-5s2.240-5 5-5 5 2.240 5 5-2.240 5-5 5zm0-8c-1.660 0-3 1.340-3 3s1.340 3 3 3 3-1.340 3-3-1.340-3-3-3z" fill="#44474e"/></svg>
            </div>

            <div class="forgot">¿Olvidaste tu contraseña?</div>

            <div class="submit">
              <svg width="23.500" height="23.500" viewBox="0 0 24 24"><path d="M11 7 9.600 8.400l2.600 2.600H2v2h10.200l-2.600 2.600L11 17l5-5-5-5zm9 12h-8v2h8c1.100 0 2-.9 2-2V5c0-1.100-.9-2-2-2h-8v2h8v14z" fill="#005cbb"/></svg>
              Iniciar Sesión
            </div>

            <div class="or">o continúa con</div>

            <div class="social">
              <div>
                <svg width="24" height="24" viewBox="0 0 24 24"><path d="M21 4H11l-1-3H3c-1.100 0-2 .9-2 2v15c0 1.100.9 2 2 2h8l1 3h9c1.100 0 2-.9 2-2V6c0-1.100-.9-2-2-2zM7 16c-2.760 0-5-2.240-5-5s2.240-5 5-5c1.350 0 2.480.5 3.350 1.300L9.030 8.570c-.38-.36-1.040-.78-2.030-.78-1.740 0-3.150 1.440-3.150 3.210S5.260 14.210 7 14.210c2.010 0 2.840-1.440 2.920-2.410H7v-1.710h4.680c.07.310.12.610.12 1.020C11.800 13.970 9.890 16 7 16zm6.170-5.420h3.700c-.43 1.250-1.110 2.430-2.050 3.470-.31-.35-.6-.72-.86-1.100l-.79-2.370zm8.330 9.920c0 .55-.45 1-1 1H14l2-2.500-1.040-3.100 3.100 3.100.92-.92-3.300-3.250.02-.02c1.130-1.250 1.930-2.690 2.400-4.220H20v-1.300h-4.530V8h-1.290v1.290h-1.440L11.460 5.500h9.040c.55 0 1 .45 1 1v14z" fill="#005cbb"/></svg>
                Google
              </div>
              <div>
                <svg width="22" height="22" viewBox="0 0 24 24"><path d="M22 12c0-5.520-4.480-10-10-10S2 6.480 2 12c0 4.840 3.440 8.870 8 9.800V15H8v-3h2V9.500C10 7.570 11.570 6 13.500 6H16v3h-2c-.55 0-1 .45-1 1v2h3v3h-3v6.950c5.050-.5 9-4.760 9-9.950z" fill="#005cbb" transform="translate(-1.200 -1.200) scale(1.100)"/></svg>
                Facebook
              </div>
            </div>

            <div class="signup"><span>¿No tienes una cuenta?</span><b>Crear cuenta</b></div>
          </div>
          <div class="shade"></div>
        </section>
        <div class="frame"></div>
      </main>

      <footer class="dock">
        ${dockMain.map((d) => this.dockItem(d))}
        <div class="sep"></div>
        ${dockApps.map((d) => this.dockItem(d))}
        <div class="sep end"></div>
        <svg width="49" height="51" viewBox="0 0 49 51"><path d="M3 0h43v4H3z" fill="#f3f3f3"/><path d="M.500 2.500h48V52H.500z" fill="#fff"/><rect x="16" y="13.500" width="17" height="19.500" rx="2.500" fill="none" stroke="#444" stroke-width=".9"/><circle cx="24.500" cy="19.500" r="4.400" fill="none" stroke="#444" stroke-width=".9"/><path d="M18.500 26h12M18.500 28.300h12M18.500 30.600h8" stroke="#444" stroke-width=".9"/><text x="8" y="41.500" font-family="Inter" font-weight="800" font-size="6.200" textLength="33" lengthAdjust="spacingAndGlyphs" fill="#111">NOTES APP</text></svg>
        <svg class="trash" width="42" height="55" viewBox="0 0 42 55"><defs><linearGradient id="can" x1="0" x2="1" y1="0" y2="0"><stop offset="0" stop-color="#8d9092"/><stop offset=".3" stop-color="#686b6d"/><stop offset=".65" stop-color="#85888a"/><stop offset="1" stop-color="#5c5f61"/></linearGradient></defs><path d="M.500 5.500 5 49q.5 5 16 5t16-5L41.500 5.500z" fill="url(#can)"/><ellipse cx="21" cy="6.500" rx="20.500" ry="4.500" fill="#484a4c" stroke="#9c9fa1" stroke-width="1"/><path d="M5 7 9 2l4 2 3-4 6 3 5-3 3 4 5-1 2 5-6 3-6-1-5 3-6-2-6 1z" fill="#dfe1e2"/><path d="m12 4 4 4M20 3l-2 6M27 3l3 6M33 4l-4 5" stroke="#3b3f46" stroke-width="1.500"/><path d="m14 7 3 1" stroke="#2bb3a4" stroke-width="2"/><path d="m24 8 3 1" stroke="#c7553e" stroke-width="2"/></svg>
      </footer>
    `;
  }
}
